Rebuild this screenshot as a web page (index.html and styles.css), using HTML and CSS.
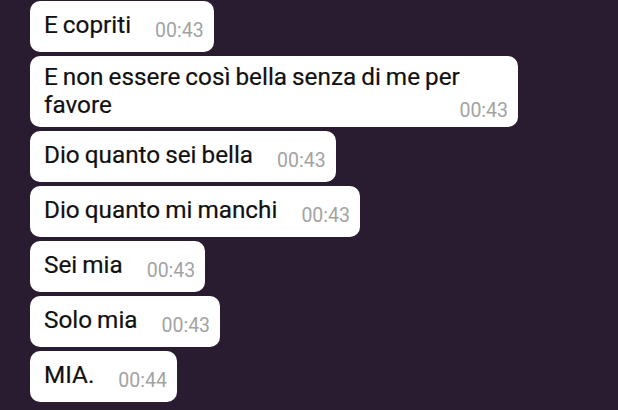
FILE: index.html
```html
<!DOCTYPE html>
<html lang="it">
<head>
<meta charset="utf-8">
<title>Chat</title>
<link rel="stylesheet" href="styles.css">
</head>
<body>
<div class="chat">
  <div class="bubble"><span class="time">00:43</span>E copriti</div>
  <div class="bubble bubble--multi">E non essere così bella senza di me per favore<span class="time">00:43</span></div>
  <div class="bubble"><span class="time">00:43</span>Dio quanto sei bella</div>
  <div class="bubble"><span class="time">00:43</span>Dio quanto mi manchi</div>
  <div class="bubble"><span class="time">00:43</span>Sei mia</div>
  <div class="bubble"><span class="time">00:43</span>Solo mia</div>
  <div class="bubble"><span class="time">00:44</span>MIA.</div>
</div>
</body>
</html>
```

FILE: styles.css
```css
html, body {
  margin: 0;
  padding: 0;
  background: #291b30;
  height: 100%;
  overflow: hidden;
}

.chat {
  display: flex;
  flex-direction: column;
  align-items: flex-start;
  gap: 4px;
  padding: 1px 0 0 30px;
  font-family: Roboto, "Noto Sans", sans-serif;
}

.bubble {
  box-sizing: border-box;
  max-width: 488px;
  background: #ffffff;
  color: #111111;
  border-radius: 10px;
  padding: 10px 10px 13px 14px;
  font-size: 24.3px;
  line-height: 28px;
  word-spacing: -1px;
  display: flow-root;
  -webkit-text-stroke: 0.2px #111111;
}

.bubble--multi {
  padding-top: 7px;
  padding-bottom: 8px;
}

.time {
  float: right;
  margin-left: 24px;
  font-size: 19.5px;
  line-height: 28px;
  word-spacing: 0;
  color: #a3a3a3;
  -webkit-text-stroke: 0;
  position: relative;
  top: 6px;
}
```
